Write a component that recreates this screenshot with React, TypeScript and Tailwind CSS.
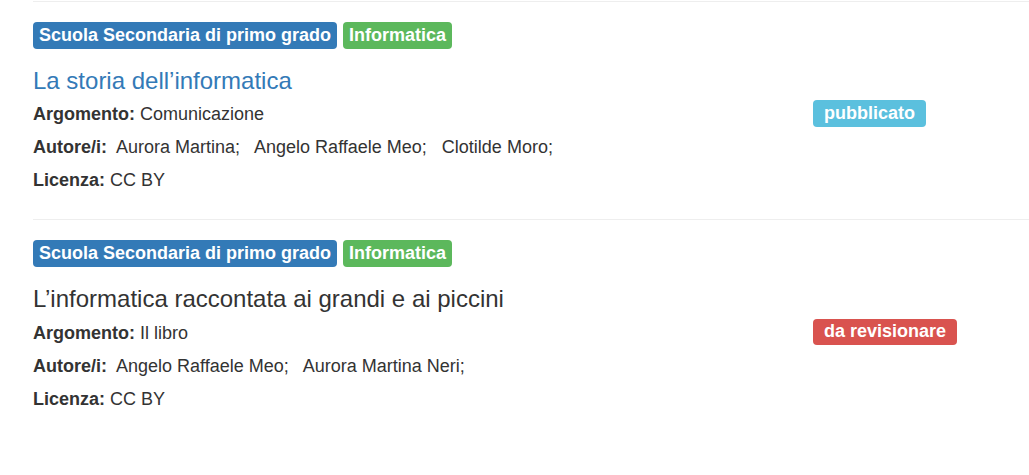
import React from 'react';

interface Resource {
  title: string;
  linked: boolean;
  argomento: string;
  autori: string[];
  licenza: string;
  status: 'pubblicato' | 'da revisionare';
}

const resources: Resource[] = [
  {
    title: 'La storia dell’informatica',
    linked: true,
    argomento: 'Comunicazione',
    autori: ['Aurora Martina', 'Angelo Raffaele Meo', 'Clotilde Moro'],
    licenza: 'CC BY',
    status: 'pubblicato',
  },
  {
    title: 'L’informatica raccontata ai grandi e ai piccini',
    linked: false,
    argomento: 'Il libro',
    autori: ['Angelo Raffaele Meo', 'Aurora Martina Neri'],
    licenza: 'CC BY',
    status: 'da revisionare',
  },
];

function ResourceItem({ item }: { item: Resource }) {
  return (
    <div className="border-t border-[#eeeeee] pt-[20px] pb-[22px]">
      <div className="flex gap-[6px]">
        <span className="rounded-[4px] bg-[#337ab7] px-[6px] pt-[3.5px] pb-[5px] text-[18px] font-bold leading-[18px] text-white">
          Scuola Secondaria di primo grado
        </span>
        <span className="rounded-[4px] bg-[#5cb85c] px-[6px] pt-[3.5px] pb-[5px] text-[18px] font-bold leading-[18px] text-white">
          Informatica
        </span>
      </div>
      <h3
        className={
          'mt-[19px] text-[24px] leading-[26.4px] ' +
          (item.linked ? 'text-[#337ab7]' : 'text-[#333333]')
        }
      >
        {item.title}
      </h3>
      <div className="mt-[4.5px] flex">
        <div className="w-[780px] text-[18px] leading-[33px] text-[#333333]">
          <p>
            <b>Argomento:</b> {item.argomento}
          </p>
          <p className="whitespace-pre">
            <b>Autore/i:</b>
            {item.autori.map((a) => '  ' + a + '; ').join('')}
          </p>
          <p>
            <b>Licenza:</b> {item.licenza}
          </p>
        </div>
        <div className="pt-[2px]">
          {item.status === 'pubblicato' ? (
            <span className="inline-block rounded-[4px] bg-[#5bc0de] px-[11px] pt-[3.5px] pb-[5px] text-[18px] font-bold leading-[18px] text-white">
              pubblicato
            </span>
          ) : (
            <span className="inline-block rounded-[4px] bg-[#d9534f] px-[11px] pt-[3.5px] pb-[5px] text-[18px] font-bold leading-[18px] text-white">
              da revisionare
            </span>
          )}
        </div>
      </div>
    </div>
  );
}

export default function App() {
  return (
    <div
      className="min-h-[475px] bg-white pt-px pl-[33px]"
      style={{ fontFamily: '"Liberation Sans", Arial, sans-serif' }}
    >
      {resources.map((r) => (
        <ResourceItem key={r.title} item={r} />
      ))}
    </div>
  );
}
